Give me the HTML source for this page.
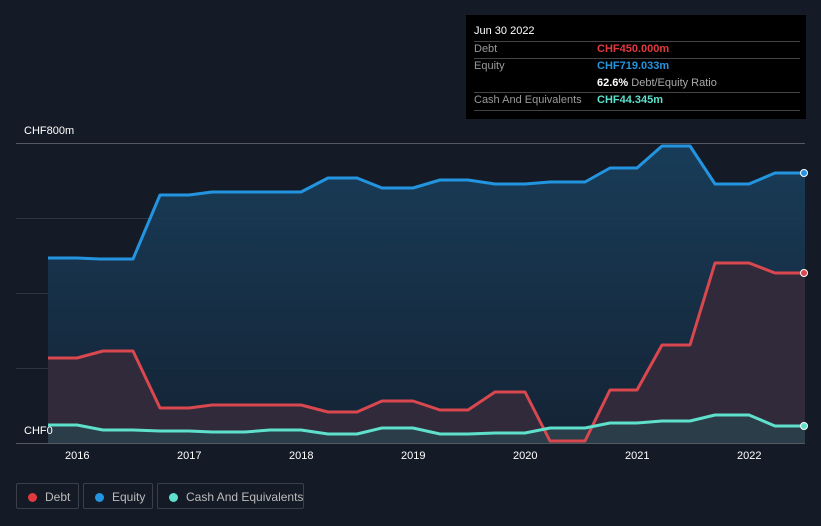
<!DOCTYPE html>
<html><head><meta charset="utf-8"><style>
body{margin:0;width:821px;height:526px;background:#151b26;font-family:"Liberation Sans",sans-serif;overflow:hidden;position:relative}
.tt{position:absolute;left:466px;top:15px;width:340px;height:104px;background:#000;color:#fff;font-size:11px}
.tt .r{position:absolute;left:8px;right:6px;border-top:1px solid #444}
.lab{position:absolute;color:#999}
.leg{position:absolute;top:483px;height:26px;border:1px solid #3a404a;border-radius:2px;color:#bbb;font-size:12px;line-height:26px;box-sizing:border-box;white-space:nowrap}
.leg i{display:inline-block;width:9px;height:9px;border-radius:50%;margin:0 8px 0 11px;vertical-align:-1px}
.ax{position:absolute;color:#fff;font-size:11px}
</style></head><body>
<svg width="821" height="526" style="position:absolute;left:0;top:0">
<defs><linearGradient id="g" x1="0" y1="0" x2="0" y2="1"><stop offset="0" stop-color="#19405e"/><stop offset="1" stop-color="#142436"/></linearGradient></defs>
<g stroke="#2e3440" stroke-width="1"><line x1="16" y1="143.5" x2="805" y2="143.5" stroke="#555a62"/><line x1="16" y1="218.5" x2="805" y2="218.5"/><line x1="16" y1="293.5" x2="805" y2="293.5"/><line x1="16" y1="368.5" x2="805" y2="368.5"/><line x1="16" y1="443.5" x2="805" y2="443.5" stroke="#555a62"/></g>
<path d="M48,258 L77,258 100,259 133,259 160,195 189,195 212,192 301,192 328,178 357,178 382,188 413,188 440,180 468,180 495,184 525,184 550,182 585,182 610,168 637,168 662,146 690,146 715,184 749,184 775,173 805,173 L805,443 48,443Z" fill="url(#g)" opacity=".9"/>
<path d="M48,358 L77,358 103,351 133,351 160,408 189,408 212,405 301,405 328,412 357,412 382,401 413,401 440,410 468,410 495,392 525,392 550,441 585,441 610,390 637,390 662,345 690,345 715,263 749,263 775,273 805,273 L805,443 48,443Z" fill="#302a3a"/>
<path d="M48,425 L77,425 103,430 133,430 160,431 189,431 212,432 245,432 270,430 301,430 328,434 357,434 382,428 413,428 440,434 468,434 495,433 525,433 550,428 585,428 610,423 637,423 662,421 690,421 715,415 749,415 775,426 805,426 L805,443 48,443Z" fill="#2b3d48"/>
<g fill="none" stroke-width="3" stroke-linejoin="round">
<path d="M48,258 L77,258 100,259 133,259 160,195 189,195 212,192 301,192 328,178 357,178 382,188 413,188 440,180 468,180 495,184 525,184 550,182 585,182 610,168 637,168 662,146 690,146 715,184 749,184 775,173 805,173" stroke="#2394e0"/>
<path d="M48,358 L77,358 103,351 133,351 160,408 189,408 212,405 301,405 328,412 357,412 382,401 413,401 440,410 468,410 495,392 525,392 550,441 585,441 610,390 637,390 662,345 690,345 715,263 749,263 775,273 805,273" stroke="#d9474f"/>
<path d="M48,425 L77,425 103,430 133,430 160,431 189,431 212,432 245,432 270,430 301,430 328,434 357,434 382,428 413,428 440,434 468,434 495,433 525,433 550,428 585,428 610,423 637,423 662,421 690,421 715,415 749,415 775,426 805,426" stroke="#5ee0cc"/>
</g>
<circle cx="804" cy="173" r="3.5" fill="#2394e0" stroke="#fff"/><circle cx="804" cy="273" r="3.5" fill="#d9474f" stroke="#fff"/><circle cx="804" cy="426" r="3.5" fill="#5ee0cc" stroke="#fff"/>
</svg>
<div class="ax" style="left:24px;top:125px">CHF800m</div>
<div class="ax" style="left:24px;top:425px">CHF0</div>
<div class="ax" style="left:65px;top:450px">2016</div><div class="ax" style="left:177px;top:450px">2017</div><div class="ax" style="left:289px;top:450px">2018</div><div class="ax" style="left:401px;top:450px">2019</div><div class="ax" style="left:513px;top:450px">2020</div><div class="ax" style="left:625px;top:450px">2021</div><div class="ax" style="left:737px;top:450px">2022</div>
<div class="tt">
<div style="position:absolute;left:8px;top:10px">Jun 30 2022</div>
<div class="r" style="top:26px"></div>
<div class="lab" style="left:8px;top:28px">Debt</div><div style="position:absolute;left:131px;top:28px;color:#e0393e;font-weight:bold">CHF450.000m</div>
<div class="r" style="top:43px"></div>
<div class="lab" style="left:8px;top:45px">Equity</div><div style="position:absolute;left:131px;top:45px;color:#2394e0;font-weight:bold">CHF719.033m</div>
<div style="position:absolute;left:131px;top:62px"><b>62.6%</b> <span style="color:#aaa">Debt/Equity Ratio</span></div>
<div class="r" style="top:77px"></div>
<div class="lab" style="left:8px;top:79px">Cash And Equivalents</div><div style="position:absolute;left:131px;top:79px;color:#5ee0cc;font-weight:bold">CHF44.345m</div>
<div class="r" style="top:95px"></div>
</div>
<div class="leg" style="left:16px;width:63px"><i style="background:#e0393e"></i>Debt</div>
<div class="leg" style="left:83px;width:70px"><i style="background:#2394e0"></i>Equity</div>
<div class="leg" style="left:157px;width:147px"><i style="background:#5ee0cc"></i>Cash And Equivalents</div>
</body></html>
